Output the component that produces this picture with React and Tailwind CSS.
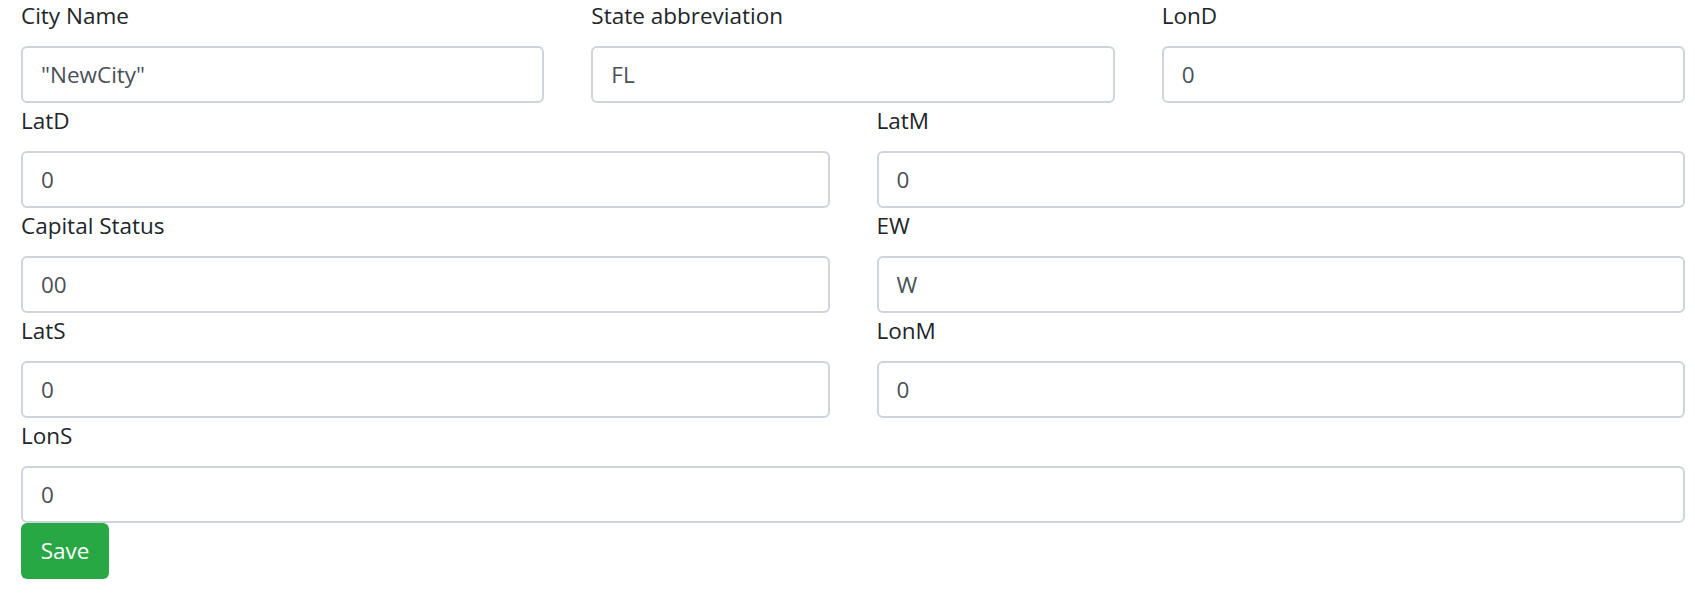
import { useState } from "react";

const fieldRows = [
  [
    { name: "cityName", label: "City Name", value: '"NewCity"' },
    { name: "state", label: "State abbreviation", value: "FL" },
    { name: "lonD", label: "LonD", value: "0" },
  ],
  [
    { name: "latD", label: "LatD", value: "0" },
    { name: "latM", label: "LatM", value: "0" },
  ],
  [
    { name: "capital", label: "Capital Status", value: "00" },
    { name: "ew", label: "EW", value: "W" },
  ],
  [
    { name: "latS", label: "LatS", value: "0" },
    { name: "lonM", label: "LonM", value: "0" },
  ],
  [{ name: "lonS", label: "LonS", value: "0" }],
];

function Field({ label, value, onChange }) {
  return (
    <div className="flex flex-col">
      <label className="text-[22.5px] leading-[36px] mb-[12px] text-[#212529]">{label}</label>
      <input
        type="text"
        value={value}
        onChange={onChange}
        className="h-[57px] w-full rounded-[6px] border-2 border-[#ced4da] bg-white px-[18px] text-[22.5px] text-[#495057] outline-none"
      />
    </div>
  );
}

export default function App() {
  const [form, setForm] = useState(() => {
    const init = {};
    fieldRows.flat().forEach((f) => (init[f.name] = f.value));
    return init;
  });

  const handleChange = (name) => (e) => setForm({ ...form, [name]: e.target.value });

  return (
    <div className="min-h-screen bg-white" style={{ fontFamily: '"Open Sans", "Noto Sans", sans-serif' }}>
      <form className="pl-[21px] pr-[10px] -mt-[2px]" onSubmit={(e) => e.preventDefault()}>
        {fieldRows.map((row, i) => (
          <div
            key={i}
            className={
              row.length === 3
                ? "grid grid-cols-3 gap-x-[47px]"
                : row.length === 2
                ? "grid grid-cols-2 gap-x-[47px]"
                : "grid grid-cols-1"
            }
          >
            {row.map((f) => (
              <Field key={f.name} label={f.label} value={form[f.name]} onChange={handleChange(f.name)} />
            ))}
          </div>
        ))}
        <button
          type="submit"
          className="h-[56px] w-[88px] rounded-[6px] bg-[#28a745] text-[22.5px] text-white"
        >
          Save
        </button>
      </form>
    </div>
  );
}
